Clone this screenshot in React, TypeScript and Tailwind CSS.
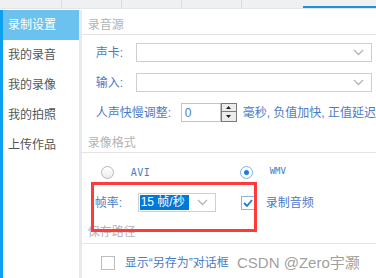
import React from 'react';

const font = { fontFamily: '"Liberation Sans", "Noto Sans CJK SC", sans-serif' };

function Chevron() {
  return (
    <svg width="11" height="7" viewBox="0 0 11 7" className="shrink-0">
      <path d="M1 1 L5.5 5.5 L10 1" fill="none" stroke="#b4b4b4" strokeWidth="1.3" />
    </svg>
  );
}

function SelectBox({ width, children }: { width: string; children?: React.ReactNode }) {
  return (
    <div className={`${width} h-[19px] border border-[#cfcfcf] bg-white flex items-center pr-[7px]`}>
      <div className="flex-1 flex items-center h-full">{children}</div>
      <Chevron />
    </div>
  );
}

function SectionHeader({ title, className }: { title: string; className: string }) {
  return (
    <div className={`${className} border-b border-[#e3e3e3] pl-[6px] text-[12px] leading-[14px] text-[#b3b3b3]`}>
      {title}
    </div>
  );
}

const sideItems = ['录制设置', '我的录音', '我的录像', '我的拍照', '上传作品'];

export default function App() {
  return (
    <div className="w-[376px] h-[278px] overflow-hidden bg-white relative" style={font}>
      {/* top tab strip */}
      <div className="h-[9px] flex bg-[#eef0f2] border-b border-[#e4e6ea]">
        <div className="w-[62px] border-r border-[#d9dce0]" />
        <div className="w-[60px] border-r border-[#d9dce0]" />
        <div className="w-[60px] border-r border-[#d9dce0]" />
        <div className="w-[60px] border-r border-[#d9dce0]" />
        <div className="w-[61px]" />
        <div className="flex-1 border-b-2 border-[#1b8fe3]" />
      </div>
      <div className="h-[1px] bg-white" />

      <div className="flex h-[268px]">
        <div className="w-[3px] bg-[#0ea0f0]" />
        <div className="w-[76px] flex flex-col">
          {sideItems.map((s, i) => (
            <div
              key={s}
              className={`h-[30px] pl-[5px] flex items-center text-[12px] ${
                i === 0 ? 'bg-[#6cc2ef] text-white' : 'text-[#555555]'
              }`}
            >
              {s}
            </div>
          ))}
        </div>
        <div className="w-[3px] bg-[#e6e9ed]" />

        <div className="flex-1 flex flex-col text-[12px] text-[#4b7bc8]">
          <SectionHeader title="录音源" className="h-[25px] pt-[8px]" />

          <div className="mt-[8px] h-[19px] flex items-center pl-[14px] pr-[4px]">
            <span className="w-[40px]">声卡:</span>
            <SelectBox width="flex-1" />
          </div>
          <div className="mt-[11px] h-[19px] flex items-center pl-[14px] pr-[4px]">
            <span className="w-[40px]">输入:</span>
            <SelectBox width="flex-1" />
          </div>
          <div className="mt-[11px] h-[19px] flex items-center pl-[14px] whitespace-nowrap">
            <span className="w-[85px]">人声快慢调整:</span>
            <div className="w-[40px] h-[19px] border border-[#c4c4c4] flex items-center pl-[3px] text-[12px]">0</div>
            <div className="w-[16px] h-[19px] flex flex-col">
              <div className="h-[9px] border border-[#7a7a7a] bg-[#ececec] flex items-center justify-center">
                <svg width="5" height="3" viewBox="0 0 5 3"><path d="M0 3 L2.5 0 L5 3 Z" fill="#222" /></svg>
              </div>
              <div className="h-[10px] border border-[#7a7a7a] border-t-0 bg-[#ececec] flex items-center justify-center">
                <svg width="5" height="3" viewBox="0 0 5 3"><path d="M0 0 L2.5 3 L5 0 Z" fill="#222" /></svg>
              </div>
            </div>
            <span className="ml-[6px]">毫秒, 负值加快, 正值延迟</span>
          </div>

          <SectionHeader title="录像格式" className="h-[31px] pt-[14px]" />

          <div className="mt-[12px] h-[14px] flex items-center pl-[19px]">
            <div className="w-[139px] flex items-center">
              <div className="w-[13px] h-[13px] rounded-full border border-[#b8b8b8] bg-gradient-to-b from-white to-[#ececec]" />
              <span className="ml-[17px] text-[10px] tracking-[0.5px]" style={{ fontFamily: '"DejaVu Sans Mono", monospace' }}>AVI</span>
            </div>
            <div className="flex items-center">
              <div className="w-[13px] h-[13px] rounded-full border border-[#7eb3df] bg-white flex items-center justify-center">
                <div className="w-[5px] h-[5px] rounded-full bg-[#1e7fd8]" />
              </div>
              <span className="ml-[17px] text-[9px]" style={{ fontFamily: '"DejaVu Sans Mono", monospace' }}>WMV</span>
            </div>
          </div>

          <div className="mt-[14px] h-[19px] flex items-center pl-[13px]">
            <span className="w-[43px]">帧率:</span>
            <div className="w-[78px] h-[19px] border border-[#cfcfcf] flex items-center pl-[1px] pr-[7px]">
              <span className="h-[15px] w-[49px] bg-[#0078d7] text-white leading-[15px] pl-[1px] whitespace-nowrap">15 帧/秒</span>
              <div className="flex-1" />
              <Chevron />
            </div>
            <div className="ml-[25px] w-[14px] h-[14px] border border-[#8fb6dc] bg-white flex items-center justify-center">
              <svg width="10" height="8" viewBox="0 0 10 8">
                <path d="M1 4 L4 7 L9 1" fill="none" stroke="#1e7fd8" strokeWidth="1.8" />
              </svg>
            </div>
            <span className="ml-[11px]">录制音频</span>
          </div>

          <SectionHeader title="保存路径" className="h-[32px] pt-[13px]" />

          <div className="mt-[12px] h-[14px] flex items-center pl-[19px] whitespace-nowrap">
            <div className="w-[14px] h-[14px] border border-[#bdbdbd] bg-white" />
            <span className="ml-[10px]">显示“另存为”对话框</span>
          </div>
        </div>
      </div>

      {/* annotation box */}
      <div className="absolute left-[91px] top-[182px] w-[166px] h-[50px] border-[3px] border-[#ff3a3a]" />

      {/* watermark */}
      <div className="absolute left-[237px] top-[253px] text-[15px] leading-[20px] text-[#a0a0a0] whitespace-nowrap">
        CSDN @Zero宇灏
      </div>
    </div>
  );
}
